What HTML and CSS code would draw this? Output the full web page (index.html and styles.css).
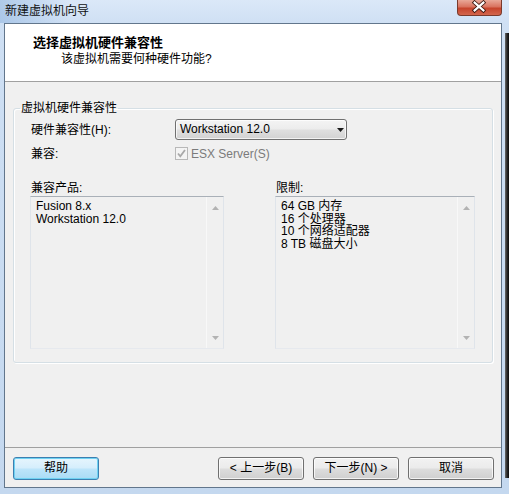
FILE: index.html
```html
<!DOCTYPE html>
<html lang="zh">
<head>
<meta charset="utf-8">
<title>新建虚拟机向导</title>
<link rel="stylesheet" href="styles.css">
</head>
<body>
<div class="window">
  <div class="titlebar">
    <span class="title">新建虚拟机向导</span>
    <div class="close">
      <svg width="45" height="16" viewBox="0 0 45 16">
        <path d="M18 3.5 L27 11.5 M27 3.5 L18 11.5" stroke="#3b1710" stroke-width="4" stroke-linecap="square"/>
        <path d="M18 3.5 L27 11.5 M27 3.5 L18 11.5" stroke="#ffffff" stroke-width="2.2" stroke-linecap="square"/>
      </svg>
    </div>
  </div>
  <div class="frame">
    <div class="client">
      <div class="header">
        <div class="h-title">选择虚拟机硬件兼容性</div>
        <div class="h-sub">该虚拟机需要何种硬件功能?</div>
      </div>
      <div class="body">
        <fieldset class="group">
          <legend>虚拟机硬件兼容性</legend>
          <div class="form">
            <span class="lbl">硬件兼容性(H):</span>
            <div class="combo">
              <span>Workstation 12.0</span>
              <svg class="combo-arrow" width="7" height="4" viewBox="0 0 7 4"><path d="M0 0 H7 L3.5 4 Z" fill="#1a1a1a"/></svg>
            </div>
            <span class="lbl">兼容:</span>
            <div class="check">
              <span class="box">
                <svg width="11" height="11" viewBox="0 0 11 11"><path d="M2 5.5 L4.3 8.3 L9 2" fill="none" stroke="#a9a9a9" stroke-width="1.8"/></svg>
              </span>
              <span class="check-text">ESX Server(S)</span>
            </div>
          </div>
          <div class="lists">
            <div class="col col-left">
              <div class="list-lbl">兼容产品:</div>
              <div class="listbox">
                <div class="items">
                  <div>Fusion 8.x</div>
                  <div>Workstation 12.0</div>
                </div>
                <div class="sb">
                  <svg width="7" height="4" viewBox="0 0 7 4"><path d="M0 4 H7 L3.5 0 Z" fill="#b3b3b3"/></svg>
                  <svg width="7" height="4" viewBox="0 0 7 4"><path d="M0 0 H7 L3.5 4 Z" fill="#b3b3b3"/></svg>
                </div>
              </div>
            </div>
            <div class="col col-right">
              <div class="list-lbl">限制:</div>
              <div class="listbox">
                <div class="items">
                  <div>64 GB 内存</div>
                  <div>16 个处理器</div>
                  <div>10 个网络适配器</div>
                  <div>8 TB 磁盘大小</div>
                </div>
                <div class="sb">
                  <svg width="7" height="4" viewBox="0 0 7 4"><path d="M0 4 H7 L3.5 0 Z" fill="#b3b3b3"/></svg>
                  <svg width="7" height="4" viewBox="0 0 7 4"><path d="M0 0 H7 L3.5 4 Z" fill="#b3b3b3"/></svg>
                </div>
              </div>
            </div>
          </div>
        </fieldset>
      </div>
      <div class="footer">
        <button class="btn btn-default">帮助</button>
        <button class="btn btn-back">&lt; 上一步(B)</button>
        <button class="btn">下一步(N) &gt;</button>
        <button class="btn">取消</button>
      </div>
    </div>
    <div class="shade"><div class="shade-dark"></div></div>
  </div>
</div>
</body>
</html>
```

FILE: styles.css
```css
* { box-sizing: border-box; }

html, body {
  margin: 0;
  padding: 0;
  background: #c6d9f0;
}

body {
  font-family: "Liberation Sans", "Noto Sans CJK SC", sans-serif;
  font-size: 12px;
  color: #000;
}

.window {
  width: 509px;
  height: 494px;
  overflow: hidden;
  display: flex;
  flex-direction: column;
  background: linear-gradient(180deg, #cfe0f4 0%, #c4d8ef 100%);
}

.titlebar {
  height: 23px;
  flex: none;
  display: flex;
  align-items: flex-start;
  background:
    linear-gradient(90deg, rgba(140, 178, 222, 0.55) 0, rgba(255, 255, 255, 0) 70px),
    linear-gradient(180deg, #dbe8f8 0%, #cfe0f4 100%);
}

.title {
  padding-left: 5px;
  line-height: 23px;
  font-size: 12px;
  color: #111;
}

.close {
  margin-left: auto;
  margin-right: 7px;
  width: 45px;
  height: 16px;
  border: 1px solid #7a3a2c;
  border-top: none;
  border-radius: 0 0 4px 4px;
  background: linear-gradient(180deg, #e9a898 0%, #d9735f 45%, #c6442c 55%, #d3664d 100%);
  display: flex;
}

.close svg { display: block; margin: -1px 0 0 -1px; }

.frame {
  height: 465px;
  flex: none;
  display: flex;
  padding-left: 4px;
}

.client {
  width: 498px;
  height: 465px;
  border: 1px solid #62768c;
  display: flex;
  flex-direction: column;
  background: #f0f0f0;
}

.header {
  height: 58px;
  flex: none;
  background: #fff;
  border-bottom: 1px solid #a0a0a0;
  padding: 11px 0 0 28px;
}

.h-title {
  font-size: 13px;
  line-height: 15px;
  font-weight: bold;
}

.h-sub {
  margin: 2px 0 0 28px;
  font-size: 12px;
  line-height: 14px;
}

.body {
  height: 365px;
  flex: none;
  padding: 20px 8px 0 8px;
}

.group {
  margin: 0;
  min-width: 0;
  padding: 4px 0 13px 6px;
  border: 1px solid #d5dfe5;
  border-radius: 3px;
  box-shadow: inset 1px 1px 0 #fff, 1px 1px 0 #fff;
}

.group legend {
  padding: 0 1px;
  font-size: 12px;
  line-height: 13px;
}

.form {
  margin-left: 11px;
  display: grid;
  grid-template-columns: 144px 172px;
  grid-template-rows: 21px 13px;
  row-gap: 7px;
  align-items: center;
}

.lbl { line-height: 14px; }

.combo {
  height: 21px;
  border: 1px solid #707070;
  border-radius: 3px;
  background: linear-gradient(180deg, #f4f4f4 0%, #ececec 48%, #dfdfdf 52%, #d2d2d2 100%);
  box-shadow: inset 0 0 0 1px rgba(255, 255, 255, 0.7);
  display: flex;
  align-items: center;
  padding: 0 0 0 4px;
}

.combo span { flex: 1; line-height: 19px; }

.combo-arrow { margin-right: 2px; }

.check {
  display: flex;
  align-items: center;
  height: 13px;
}

.box {
  width: 13px;
  height: 13px;
  border: 1px solid #b8b8b8;
  background: #f4f4f4;
  display: flex;
}

.box svg { display: block; }

.check-text {
  margin-left: 3px;
  color: #7b7b7b;
  line-height: 14px;
}

.lists {
  margin: 21px 0 0 10px;
  display: flex;
  gap: 51px;
}

.col-left { width: 194px; }
.col-right { width: 200px; }

.list-lbl {
  height: 15px;
  line-height: 14px;
  padding-left: 1px;
}

.listbox {
  height: 153px;
  border: 1px solid;
  border-color: #a9b0b8 #dfe4ea #e6e9ee #dfe4ea;
  background: #f0f0f0;
  display: flex;
}

.items {
  flex: 1;
  padding: 3px 0 0 5px;
  line-height: 12.5px;
}

.sb {
  width: 17px;
  border-left: 1px solid #f8f8f8;
  display: flex;
  flex-direction: column;
  justify-content: space-between;
  align-items: center;
  padding: 9px 0 8px 0;
}

.sb svg { display: block; }

.footer {
  height: 40px;
  flex: none;
  border-top: 1px solid #a0a0a0;
  padding: 9px 7px 0 8px;
  display: flex;
  align-items: flex-start;
  gap: 9px;
}

.btn {
  width: 86px;
  height: 23px;
  margin: 0;
  padding: 0;
  border: 1px solid #707070;
  border-radius: 3px;
  background: linear-gradient(180deg, #f2f2f2 0%, #ebebeb 48%, #dddddd 52%, #cfcfcf 100%);
  box-shadow: inset 0 0 0 1px rgba(255, 255, 255, 0.75);
  font-family: "Liberation Sans", "Noto Sans CJK SC", sans-serif;
  font-size: 12px;
  line-height: 21px;
  color: #000;
  text-align: center;
}

.btn-default {
  border-color: #3c7fb1;
  background: linear-gradient(180deg, #e6f5fd 0%, #d5eefc 48%, #bde5fa 52%, #a9dcf5 100%);
  box-shadow: inset 0 0 0 1px #6fd2f2;
}

.btn-back { margin-left: auto; }

.shade {
  width: 7px;
  padding-left: 3px;
  display: flex;
  flex-direction: column;
}

.shade-dark {
  margin-top: 10px;
  height: 445px;
  background: linear-gradient(90deg, #6b6b6b 0%, #2a2a2a 50%, #0b0b0b 100%);
}
```
